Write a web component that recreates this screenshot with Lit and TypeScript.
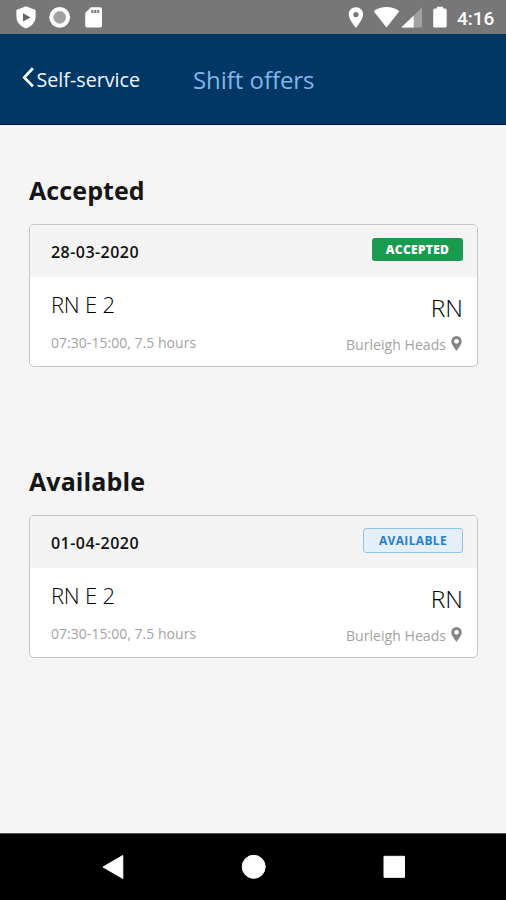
import { LitElement, html, css } from "lit";
import { customElement, property } from "lit/decorators.js";

@customElement("status-bar")
class StatusBar extends LitElement {
  static styles = css`
    :host { display: block; height: 34px; background: #777; }
    .icons { display: block; }
    .time { font: 500 19px Roboto, sans-serif; fill: #fff; }
  `;
  render() {
    return html`<svg class="icons" width="506" height="34" viewBox="0 0 506 34" fill="#fff">
      <path d="M26 6.3 35.6 10v6.6c0 5.8-3.8 9.8-9.6 12-5.8-2.2-9.6-6.2-9.6-12V10z" />
      <path d="M23 13.2v8.4l7.6-4.2z" fill="#666" />
      <circle cx="59.7" cy="17.3" r="10.4" />
      <circle cx="59.7" cy="17.3" r="6" fill="#a0a0a0" stroke="#b4b4b4" />
      <path d="M91 7.3h9a2 2 0 0 1 2 2V25.5a2 2 0 0 1-2 2H87.2a2 2 0 0 1-2-2V13z" />
      <path d="M91.3 9.9h2v3h-2zm3 0h2v3h-2zm3 0h2v3h-2z" fill="#777" />
      <path fill-rule="evenodd" d="M355.9 7.3c-4.2 0-7.2 3.1-7.2 7.1 0 5 7.2 13.3 7.2 13.3s7.2-8.3 7.2-13.3c0-4-3-7.1-7.2-7.1zm0 4.6a2.6 2.6 0 1 1 0 5.2 2.6 2.6 0 0 1 0-5.2z" />
      <path d="M386.5 27.5 373.7 11.3c7.3-5.6 18.3-5.6 25.6 0z" />
      <path d="M422 7.5v20h-20.7z" fill="#a2a2a2" />
      <path d="M413.7 15.5v12h-12.4z" />
      <path d="M437 6.7h6v1.8h2.2a1.5 1.5 0 0 1 1.5 1.5v16a1.6 1.6 0 0 1-1.6 1.6h-10.3a1.6 1.6 0 0 1-1.6-1.6V10a1.5 1.5 0 0 1 1.5-1.5h2.3z" />
      <text class="time" x="457" y="24.7">4:16</text>
    </svg>`;
  }
}

@customElement("app-header")
class AppHeader extends LitElement {
  static styles = css`
    :host { display: flex; height: 91px; box-sizing: border-box; background: #003865; border-bottom: 1px solid #001050; padding-left: 22px; white-space: nowrap; }
    .back { display: flex; width: 171px; color: #f4f5ff; font-size: 19.7px; line-height: 28px; padding-top: 31px; box-sizing: border-box; }
    .chevron { margin: 2px 1.5px 0 0; flex: none; }
    .label { padding-top: 1px; }
    .title { color: #85b4ea; font-size: 24px; letter-spacing: -0.05px; line-height: 32px; padding-top: 30px; }
  `;
  render() {
    return html`<div class="back">
        <svg class="chevron" width="13" height="22" viewBox="0 0 13 22"><path d="M10.9 1.2 2.3 10.4l8.6 9" fill="none" stroke="#fff" stroke-width="2.8" /></svg>
        <span class="label">Self-service</span>
      </div>
      <div class="title">Shift offers</div>`;
  }
}

@customElement("shift-card")
class ShiftCard extends LitElement {
  @property() date = "";
  @property() status = "accepted";
  static styles = css`
    :host { display: block; height: 143px; box-sizing: border-box; border: 1px solid #c6c6c6; border-radius: 5px; background: #fff; overflow: hidden; white-space: nowrap; }
    .head { display: flex; justify-content: space-between; align-items: flex-start; height: 52px; background: #f4f4f4; padding: 0 14px 0 21px; }
    .date { font-size: 16px; font-weight: 600; letter-spacing: 0.45px; line-height: 24px; color: #111; padding-top: 15px; }
    .badge { box-sizing: border-box; border-radius: 3px; font-size: 12px; text-align: center; }
    .accepted { width: 91px; height: 23px; line-height: 23px; margin-top: 13px; background: #199b50; color: #fff; font-weight: 800; letter-spacing: 0.3px; }
    .available { width: 100px; height: 25px; line-height: 23px; margin-top: 12px; background: #e5eff8; border: 1px solid #8fc4eb; color: #2880c8; font-weight: 700; letter-spacing: 0.35px; }
    .body { display: flex; justify-content: space-between; padding: 0 14px 0 21px; }
    .role { font-size: 22px; font-weight: 300; letter-spacing: -0.2px; line-height: 30px; color: #000; padding-top: 12px; }
    .hours { font-size: 14px; letter-spacing: 0.03px; line-height: 20px; color: #a3a3a3; padding-top: 14px; }
    .right { text-align: right; }
    .code { font-size: 24.5px; font-weight: 300; line-height: 32px; color: #000; padding-top: 15px; }
    .place { display: flex; justify-content: flex-end; font-size: 14.1px; line-height: 20px; color: #a3a3a3; padding-top: 11px; }
    .pin { margin: 1px 1px 0 5px; }
  `;
  render() {
    return html`<div class="head">
        <div class="date">${this.date}</div>
        <div class="badge ${this.status}">${this.status.toUpperCase()}</div>
      </div>
      <div class="body">
        <div><div class="role">RN E 2</div><div class="hours">07:30-15:00, 7.5 hours</div></div>
        <div class="right">
          <div class="code">RN</div>
          <div class="place"><span>Burleigh Heads</span>
            <svg class="pin" width="11" height="15" viewBox="0 0 11 15"><path fill="#858585" fill-rule="evenodd" d="M5.5 0A5.2 5.2 0 0 0 .3 5.2C.3 8.2 2 9.6 5.5 15 9 9.6 10.7 8.2 10.7 5.2A5.2 5.2 0 0 0 5.5 0zm0 2.9a2.4 2.4 0 1 1 0 4.8 2.4 2.4 0 0 1 0-4.8z" /></svg>
          </div>
        </div>
      </div>`;
  }
}

@customElement("app-root")
class AppRoot extends LitElement {
  static styles = css`
    :host { display: flex; flex-direction: column; width: 506px; height: 900px; background: #f5f5f5; font-family: "Open Sans", "Noto Sans", sans-serif; overflow: hidden; }
    .content { flex: 1; padding: 0 28px 0 29px; }
    .heading { margin: 0; padding-top: 50px; height: 49px; font-size: 25px; font-weight: 700; letter-spacing: 0.1px; line-height: 31px; color: #161616; }
    .second { margin-top: 49px; }
    .nav { height: 67px; box-sizing: border-box; background: #000; border-top: 1px solid #555; }
    .keys { display: block; }
  `;
  render() {
    return html`<status-bar></status-bar>
      <app-header></app-header>
      <div class="content">
        <h2 class="heading">Accepted</h2>
        <shift-card date="28-03-2020" status="accepted"></shift-card>
        <h2 class="heading second">Available</h2>
        <shift-card date="01-04-2020" status="available"></shift-card>
      </div>
      <div class="nav">
        <svg class="keys" width="506" height="66" viewBox="0 834 506 66" fill="#fff" stroke="#fff" stroke-linejoin="round">
          <path d="M103 867 122.8 855.5v23z" />
          <circle cx="253.7" cy="866.8" r="11.5" />
          <rect x="384" y="856.3" width="20.5" height="21" />
        </svg>
      </div>`;
  }
}
